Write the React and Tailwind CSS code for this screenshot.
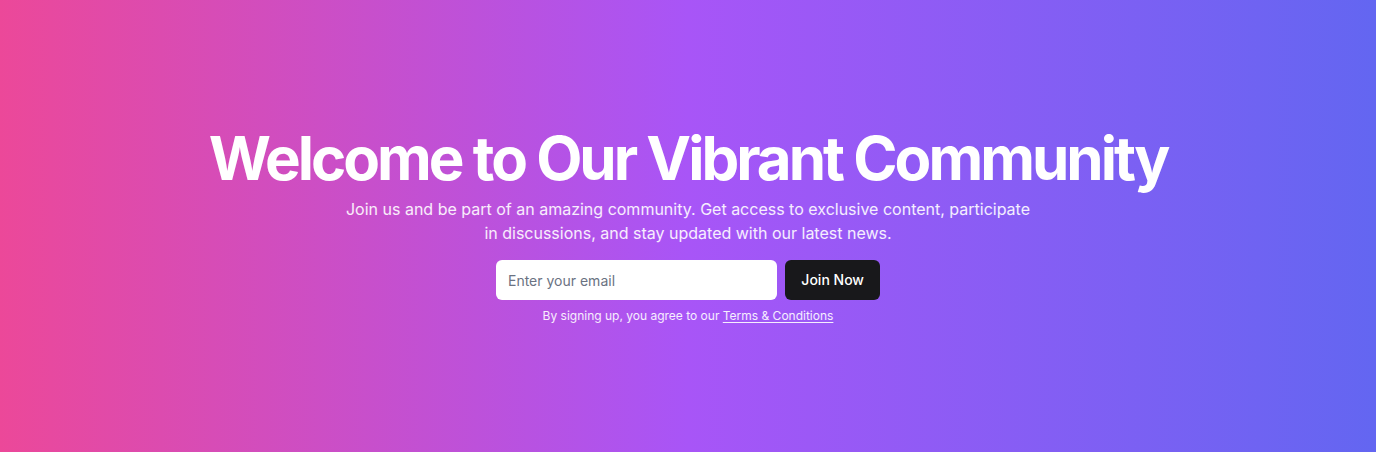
export default function App() {
  return (
    <div
      className="w-full h-[452px] flex items-center justify-center bg-linear-to-r/srgb from-[#ec4899] via-[#a855f7] to-[#6366f1]"
      style={{ fontFamily: "Inter, 'Noto Sans', sans-serif" }}
    >
      <div className="flex flex-col items-center text-center px-4">
        {/* Headline */}
        <h1 className="text-6xl leading-none font-bold tracking-tighter text-white">
          Welcome to Our Vibrant Community
        </h1>

        {/* Subtext */}
        <p className="mt-[9px] max-w-[700px] text-base leading-6 text-white/90">
          Join us and be part of an amazing community. Get access to exclusive content, participate in
          discussions, and stay updated with our latest news.
        </p>

        {/* Signup form */}
        <div className="mt-[15px] w-full max-w-sm">
          <form className="flex gap-2" onSubmit={(e) => e.preventDefault()}>
            <input
              type="email"
              placeholder="Enter your email"
              className="flex-1 h-10 px-3 rounded-md bg-white text-sm text-gray-900 placeholder:text-gray-500 outline-none"
            />
            <button
              type="submit"
              className="h-10 px-4 rounded-md bg-[#18181b] text-sm font-medium text-white"
            >
              Join Now
            </button>
          </form>
          <p className="mt-2 text-xs leading-4 text-white/90">
            By signing up, you agree to our{" "}
            <a href="#" className="underline underline-offset-2">
              Terms &amp; Conditions
            </a>
          </p>
        </div>
      </div>
    </div>
  );
}
